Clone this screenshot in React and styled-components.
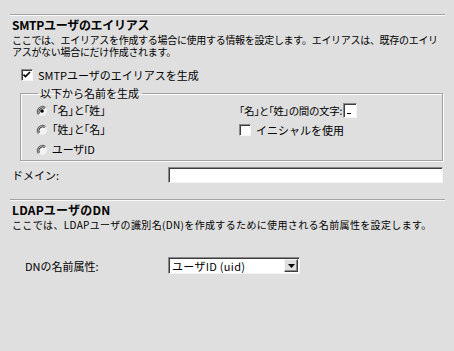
import React from 'react'
import styled, { createGlobalStyle } from 'styled-components'

const GlobalStyle = createGlobalStyle`
  html, body {
    margin: 0;
    padding: 0;
    background: #dfdfdf;
  }
  body {
    font-family: "Noto Sans CJK JP", "DejaVu Sans", sans-serif;
    font-size: 11px;
    color: #000;
  }
`

const Page = styled.div`
  width: 454px;
  height: 351px;
  box-sizing: border-box;
  padding: 0 9px 0 10px;
  background: #dfdfdf;
  overflow: hidden;
`

const Rule = styled.div`
  margin-top: ${p => p.$top || 0}px;
  height: 0;
  border-top: 1px solid #a3a3a3;
  border-bottom: 1px solid #fafafa;
`

const Title = styled.h2`
  margin: 1px 0 0 2px;
  font-size: 12px;
  font-weight: bold;
  line-height: 16px;
  letter-spacing: ${p => p.$spacing || 0}px;
`

const Desc = styled.p`
  margin: 1px 0 0 2px;
  font-size: 10px;
  line-height: 12px;
  white-space: nowrap;
  letter-spacing: ${p => p.$spacing || 0}px;
`

const CheckRow = styled.label`
  display: flex;
  align-items: center;
  gap: 5px;
  height: 14px;
  margin: ${p => p.$top || 0}px 0 0 ${p => p.$left || 0}px;
  line-height: 14px;
`

const Box = styled.span`
  display: inline-flex;
  align-items: center;
  justify-content: center;
  width: 12px;
  height: 12px;
  box-sizing: border-box;
  background: #fff;
  border-top: 1px solid #8a8a8a;
  border-left: 1px solid #8a8a8a;
  border-right: 1px solid #f4f4f4;
  border-bottom: 1px solid #f4f4f4;
  box-shadow: inset 1px 1px 0 #3c3c3c;
  flex: none;
`

const Group = styled.fieldset`
  margin: 5px 2px 0 10px;
  padding: 5px 0 4px 15px;
  border: 1px solid #a3a3a3;
  box-shadow: 1px 1px 0 #fafafa, inset 1px 1px 0 #fafafa;
  display: grid;
  grid-template-columns: 203px 1fr;
  row-gap: 6px;
  min-width: 0;
`

const Legend = styled.legend`
  padding: 0 3px 0 2px;
  margin-left: 2px;
  line-height: 12px;
  font-size: 11px;
`

const Radio = styled.label`
  display: flex;
  align-items: center;
  gap: 4px;
  height: 13px;
  line-height: 13px;
  font-feature-settings: "palt";
`

const Cell = styled.div`
  display: flex;
  align-items: center;
  height: 13px;
  gap: 1px;
`

const PairLabel = styled.span`
  white-space: nowrap;
  font-size: 10.5px;
  font-feature-settings: "palt";
  letter-spacing: -0.2px;
`

const SmallInput = styled.span`
  display: inline-block;
  width: 14px;
  height: 15px;
  box-sizing: border-box;
  background: #fff;
  border-top: 1px solid #8a8a8a;
  border-left: 1px solid #8a8a8a;
  border-right: 1px solid #f4f4f4;
  border-bottom: 1px solid #f4f4f4;
  box-shadow: inset 1px 1px 0 #3c3c3c;
  position: relative;
  flex: none;
  &::after {
    content: '';
    position: absolute;
    left: 3px;
    bottom: 3px;
    width: 4px;
    height: 1px;
    background: #000;
  }
`

const FieldRow = styled.div`
  display: grid;
  grid-template-columns: ${p => p.$label}px 1fr;
  align-items: center;
  margin-top: ${p => p.$top}px;
  padding-left: ${p => p.$indent}px;
`

const TextBox = styled.div`
  width: 275px;
  height: 16px;
  box-sizing: border-box;
  background: #fff;
  border-top: 1px solid #8a8a8a;
  border-left: 1px solid #8a8a8a;
  border-right: 1px solid #f4f4f4;
  border-bottom: 1px solid #f4f4f4;
  box-shadow: inset 1px 1px 0 #3c3c3c;
`

const Select = styled.div`
  display: flex;
  align-items: center;
  width: 132px;
  height: 17px;
  box-sizing: border-box;
  background: #fff;
  border-top: 1px solid #8a8a8a;
  border-left: 1px solid #8a8a8a;
  border-right: 1px solid #f4f4f4;
  border-bottom: 1px solid #f4f4f4;
  box-shadow: inset 1px 1px 0 #3c3c3c;
  padding: 1px 1px 1px 3px;
`

const SelectText = styled.span`
  flex: 1;
  line-height: 14px;
  white-space: nowrap;
  letter-spacing: 0.3px;
`

const ArrowBtn = styled.span`
  display: flex;
  align-items: center;
  justify-content: center;
  width: 14px;
  height: 13px;
  box-sizing: border-box;
  background: #dfdfdf;
  border-top: 1px solid #f4f4f4;
  border-left: 1px solid #f4f4f4;
  border-right: 1px solid #3c3c3c;
  border-bottom: 1px solid #3c3c3c;
  box-shadow: inset -1px -1px 0 #8a8a8a;
`

const Check = () => (
  <svg width='8' height='8' viewBox='0 0 8 8'>
    <path d='M0.5 3.5 L2.5 5.5 L7 1' stroke='#000' strokeWidth='1.6' fill='none' />
  </svg>
)

const RadioDot = ({ on }) => (
  <svg width='12' height='12' viewBox='0 0 12 12' style={{ flex: 'none' }}>
    <circle cx='6' cy='6' r='5' fill='#f2f2f2' />
    <path d='M9.5 2.5 A5 5 0 0 0 2.5 9.5' stroke='#6e6e6e' strokeWidth='1.3' fill='none' />
    <path d='M8.6 3.4 A3.8 3.8 0 0 0 3.4 8.6' stroke='#2a2a2a' strokeWidth='1' fill='none' />
    {on && <circle cx='6' cy='6' r='1.8' fill='#000' />}
  </svg>
)

export default function App () {
  return (
    <Page>
      <GlobalStyle />
      <Rule $top={14} />
      <Title $spacing={-0.3}>SMTPユーザのエイリアス</Title>
      <Desc $spacing={-0.3}>
        ここでは、エイリアスを作成する場合に使用する情報を設定します。エイリアスは、既存のエイリ
        <br />
        アスがない場合にだけ作成されます。
      </Desc>
      <CheckRow $top={10} $left={11}>
        <Box>
          <Check />
        </Box>
        SMTPユーザのエイリアスを生成
      </CheckRow>
      <Group>
        <Legend>以下から名前を生成</Legend>
        <Radio>
          <RadioDot on />
          「名」と「姓」
        </Radio>
        <Cell>
          <PairLabel>「名」と「姓」の間の文字:</PairLabel>
          <SmallInput />
        </Cell>
        <Radio>
          <RadioDot />
          「姓」と「名」
        </Radio>
        <CheckRow>
          <Box />
          イニシャルを使用
        </CheckRow>
        <Radio>
          <RadioDot />
          ユーザID
        </Radio>
      </Group>
      <FieldRow $label={156} $top={6} $indent={2}>
        <span>ドメイン:</span>
        <TextBox />
      </FieldRow>
      <Rule $top={16} />
      <Title $spacing={0.2}>LDAPユーザのDN</Title>
      <Desc $spacing={0.35}>ここでは、LDAPユーザの識別名(DN)を作成するために使用される名前属性を設定します。</Desc>
      <FieldRow $label={143} $top={26} $indent={15}>
        <span>DNの名前属性:</span>
        <Select>
          <SelectText>ユーザID (uid)</SelectText>
          <ArrowBtn>
            <svg width='7' height='4' viewBox='0 0 7 4'>
              <path d='M0 0 H7 L3.5 4 Z' fill='#000' />
            </svg>
          </ArrowBtn>
        </Select>
      </FieldRow>
    </Page>
  )
}
